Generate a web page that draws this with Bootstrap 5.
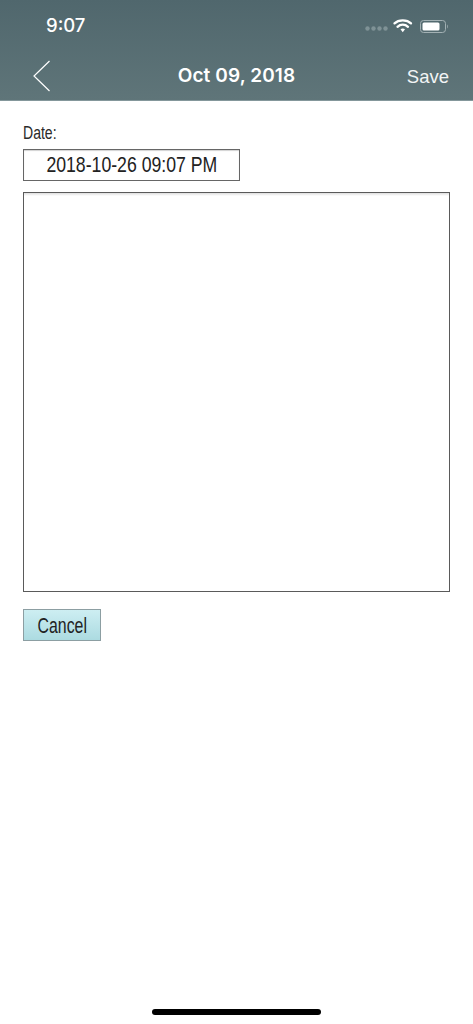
<!DOCTYPE html>
<html lang="en">
<head>
<meta charset="utf-8">
<meta name="viewport" content="width=device-width, initial-scale=1">
<link href="https://cdn.jsdelivr.net/npm/bootstrap@5.3.0/dist/css/bootstrap.min.css" rel="stylesheet">
<style>
html,body{height:1024px;overflow:hidden;background:#fff}
body{font-family:"Liberation Sans",Arial,sans-serif;color:#222}
.app-head{height:101px;background:linear-gradient(180deg,#50676d 0%,#5f7579 100%);border-bottom:1px solid #84979b;color:#fff;font-family:Inter,"Liberation Sans",sans-serif}
.status-row{height:51px;padding:0 25px 0 46px}
.clock{font-size:18.5px;font-weight:500;line-height:1}
.title-row{height:49px;padding:0 24px}
.side-cell{flex:1 1 0}
.page-title{font-size:19px;font-weight:600;letter-spacing:.1px;margin-top:2px}
.save-txt{font-family:"Liberation Sans",Arial,sans-serif;font-size:18.500px;color:#f2f5f5;display:inline-block;margin-top:2px}
.back-ico{width:18px;height:32px;display:block;margin-left:9px}
.form-zone{padding:23px 23px 0 23px}
.squeeze{display:inline-block;white-space:nowrap;flex:none}
.sq-date{transform:scaleX(.785)}
.sq-label{transform:scaleX(.78);transform-origin:left center}
.sq-cancel{transform:scaleX(.72)}
.date-lbl{font-size:18px;line-height:19px;height:19px;color:#2a2a2a}
.date-box{width:217px;height:32px;margin-top:6px;border:1px solid #666;box-shadow:inset 0 1px 1px rgba(0,0,0,.18);font-size:22.500px;line-height:30px;color:#222}
.note-box{height:400px;margin-top:11px;border:1px solid #5a5a5a;background:linear-gradient(180deg,#dedede 0,#fff 3px)}
.cancel-btn{width:78px;height:32px;margin-top:17px;border:1px solid #8c9ea2;border-radius:0;background:linear-gradient(180deg,#cdeef2 0%,#acdbe1 100%);font-size:22px;line-height:32px;color:#222;padding:0}
.home-pill{position:fixed;left:152px;top:1009px;width:169px;height:6px;border-radius:3px;background:#000}
</style>
</head>
<body>
<header class="app-head d-flex flex-column">
  <div class="status-row d-flex align-items-center justify-content-between">
    <span class="clock">9:07</span>
    <svg width="83" height="16" viewBox="0 0 83 16" aria-hidden="true">
      <g fill="#7f9296"><circle cx="2.500" cy="10.500" r="2.200"/><circle cx="8.500" cy="10.500" r="2.200"/><circle cx="14.500" cy="10.500" r="2.200"/><circle cx="20.500" cy="10.500" r="2.200"/></g>
      <g fill="none" stroke="#fff" stroke-linecap="round">
        <path d="M29.500 5.400C33.500 1.400 42 1.400 46 5.400" stroke-width="2.300"/>
        <path d="M32.500 8.800C35.500 6 40 6 43 8.800" stroke-width="2.300"/>
      </g>
      <path d="M35.500 11.300c1.300-1.200 3.200-1.200 4.500 0l-2.250 3z" fill="#fff"/>
      <rect x="55.500" y="2.500" width="25" height="12" rx="3" fill="none" stroke="#a3b1b4"/>
      <rect x="57.500" y="4.500" width="17" height="8" rx="1.500" fill="#fff"/>
      <path d="M82 6.500c1 .4 1 3.600 0 4z" fill="#a3b1b4"/>
    </svg>
  </div>
  <div class="title-row d-flex align-items-center">
    <div class="side-cell"><svg class="back-ico" viewBox="0 0 18 32" aria-hidden="true"><path d="M16.500 1 1 16 16.500 31" fill="none" stroke="#fff" stroke-width="1.200"/></svg></div>
    <span class="page-title">Oct 09, 2018</span>
    <div class="side-cell text-end"><span class="save-txt">Save</span></div>
  </div>
</header>
<main class="form-zone">
  <div class="date-lbl"><span class="squeeze sq-label">Date:</span></div>
  <div class="date-box d-flex justify-content-center"><span class="squeeze sq-date">2018-10-26 09:07 PM</span></div>
  <div class="note-box"></div>
  <button type="button" class="btn cancel-btn d-block"><span class="squeeze sq-cancel">Cancel</span></button>
</main>
<div class="home-pill"></div>
<script src="https://cdn.jsdelivr.net/npm/bootstrap@5.3.0/dist/js/bootstrap.bundle.min.js"></script>
</body>
</html>
